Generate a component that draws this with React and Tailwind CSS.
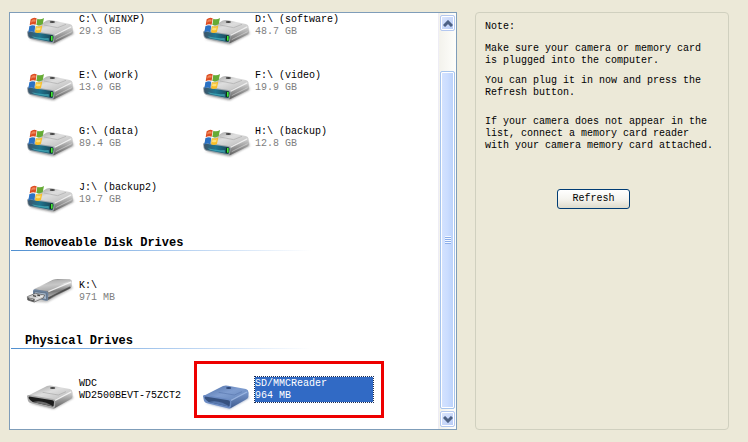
import React, { useState } from "react";

const logicalDrives = [
  { name: "C:\\ (WINXP)", info: "29.3 GB", type: "disk" },
  { name: "D:\\ (software)", info: "48.7 GB", type: "disk" },
  { name: "E:\\ (work)", info: "13.0 GB", type: "disk" },
  { name: "F:\\ (video)", info: "19.9 GB", type: "disk" },
  { name: "G:\\ (data)", info: "89.4 GB", type: "disk" },
  { name: "H:\\ (backup)", info: "12.8 GB", type: "disk" },
  { name: "J:\\ (backup2)", info: "19.7 GB", type: "disk" },
];

const removableDrives = [{ name: "K:\\", info: "971 MB", type: "usb" }];

const physicalDrives = [
  { name: "WDC", info: "WD2500BEVT-75ZCT2", type: "physical", dark: true },
  { name: "SD/MMCReader", info: "964 MB", type: "physical", marked: true },
];

// shared gradients, mounted once
const IconDefs = () => (
  <svg className="absolute h-0 w-0" aria-hidden="true">
    <defs>
      <linearGradient id="top" x1="0" y1="0" x2="1" y2="1">
        <stop offset="0" stopColor="#8d8d8d" />
        <stop offset="0.45" stopColor="#dedede" />
        <stop offset="1" stopColor="#b4b4b4" />
      </linearGradient>
      <linearGradient id="side" x1="0" y1="0" x2="0" y2="1">
        <stop offset="0" stopColor="#dadada" />
        <stop offset="0.5" stopColor="#9a9a9a" />
        <stop offset="1" stopColor="#5e5e5e" />
      </linearGradient>
      <linearGradient id="teal" x1="0" y1="0" x2="1" y2="0">
        <stop offset="0" stopColor="#3d5468" />
        <stop offset="0.45" stopColor="#1f7590" />
        <stop offset="1" stopColor="#1a4050" />
      </linearGradient>
      <linearGradient id="stick" x1="0.3" y1="0" x2="0.5" y2="1">
        <stop offset="0" stopColor="#858585" />
        <stop offset="0.3" stopColor="#dcdcdc" />
        <stop offset="0.6" stopColor="#7a7a7a" />
        <stop offset="0.8" stopColor="#a9a9a9" />
        <stop offset="1" stopColor="#444" />
      </linearGradient>
      <linearGradient id="blueTop" x1="0" y1="0" x2="1" y2="1">
        <stop offset="0" stopColor="#4d6da4" />
        <stop offset="0.5" stopColor="#7f9dd0" />
        <stop offset="1" stopColor="#6182b8" />
      </linearGradient>
      <linearGradient id="blueSide" x1="0" y1="0" x2="0" y2="1">
        <stop offset="0" stopColor="#7998cd" />
        <stop offset="1" stopColor="#3f5c91" />
      </linearGradient>
      <filter id="soft" x="-20%" y="-50%" width="140%" height="200%">
        <feGaussianBlur stdDeviation="3" />
      </filter>
    </defs>
  </svg>
);

const DiskIcon = () => (
  <svg viewBox="0 0 138 96" className="h-8 w-[46px] shrink-0 overflow-visible" aria-hidden="true">
    <path d="M6 78 L80 94 L140 62 L134 48 L70 74 Z" fill="#666" opacity="0.7" filter="url(#soft)" />
    <path d="M4 56 L58 23 Q64 20 72 21 L128 33 Q137 36 136 43 L82 68 Z" fill="url(#top)" />
    <path d="M80 65 L130 40 Q137 37 137 45 L137 59 Q136 63 130 66 L82 90 Q76 92 77 84 Z" fill="url(#side)" />
    <path d="M82 67 L132 42" stroke="#fafafa" strokeWidth="4" opacity="0.8" />
    <path d="M86 80 L134 56" stroke="#eee" strokeWidth="3" opacity="0.45" />
    <path d="M0 57 Q2 51 9 53 L76 63 Q83 64 83 70 L81 86 Q80 91 74 90 L10 78 Q4 76 2 70 Z" fill="#98a2a8" />
    <path d="M3 59 Q4 55 10 56 L75 66 Q80 67 80 72 L78 84 Q77 88 73 87 L11 75 Q6 73 4 68 Z" fill="url(#teal)" />
    <path d="M14 70 Q38 77 65 75 L66 83 L22 75 Z" fill="#4fc0c9" opacity="0.6" />
    <rect x="69" y="68" width="9" height="16" fill="#0f3017" />
    <rect x="72" y="69" width="5" height="14" fill="#42e83c" />
    <path d="M51 36 L92 44 L117 34" fill="none" stroke="#aaa" strokeWidth="2" />
    <ellipse cx="76" cy="27" rx="8" ry="3" fill="#444" />
    <path d="M11 19 Q20 11 29 16 L26 35 Q17 31 8 37 Z" fill="#dd4d22" />
    <path d="M31 17 Q41 21 51 15 L47 34 Q37 39 28 36 Z" fill="#66ab35" />
    <path d="M7 40 Q16 34 25 38 L22 58 Q13 53 4 59 Z" fill="#2b72c4" />
    <path d="M27 39 Q37 43 46 37 L42 57 Q33 62 24 58 Z" fill="#f8be28" />
    <path d="M14 22 Q20 17 26 20 L25 26 Q18 24 12 29 Z" fill="#f5a06f" opacity="0.7" />
    <path d="M29 43 Q36 46 41 43 L40 50 Q34 53 27 50 Z" fill="#ffe98b" opacity="0.8" />
  </svg>
);

const UsbIcon = () => (
  <svg viewBox="0 0 138 96" className="h-8 w-[46px] shrink-0 overflow-visible" aria-hidden="true">
    <path d="M6 67 L60 70 L137 28 L134 20 L60 58 Z" fill="#888" opacity="0.6" filter="url(#soft)" />
    <path d="M20 31 L78 2 Q84 0 92 0 L128 1 Q135 2 135 8 L134 22 Q133 27 127 30 L62 64 L56 46 Z" fill="url(#stick)" />
    <path d="M24 31 L80 4 L128 4 L64 36 Z" fill="#bdbdbd" opacity="0.65" />
    <path d="M64 38 L132 9" stroke="#fff" strokeWidth="4" opacity="0.8" />
    <path d="M64 58 L130 25" stroke="#3d3d3d" strokeWidth="5" opacity="0.75" />
    <path d="M18 36 Q18 31 24 31 L58 37 Q64 39 64 45 L63 62 Q62 67 56 65 L24 57 Q18 55 18 49 Z" fill="#6c829c" />
    <path d="M22 38 L57 42 L59 62 L24 54 Z" fill="#a6b8cc" stroke="#516277" strokeWidth="2" />
    <path d="M1 53 L25 43 L53 48 L49 57 L22 69 L2 63 Z" fill="#cfcfcf" stroke="#4e4e4e" strokeWidth="2" />
    <path d="M2 55 L23 60 L22 69 L3 63 Z" fill="#555" />
    <path d="M7 59 L19 62" stroke="#ededed" strokeWidth="2" />
    <path d="M18 50 L27 52 M31 48 L39 50" stroke="#444" strokeWidth="4" />
    <path d="M24 61 L49 50" stroke="#fff" strokeWidth="2" />
  </svg>
);

const PhysicalIcon = ({ selected }) => (
  <svg viewBox="0 0 138 96" className="h-8 w-[46px] shrink-0 overflow-visible" aria-hidden="true">
    <path d="M7 78 L80 96 L139 63 L132 52 L70 77 Z" fill={selected ? "#7186ae" : "#777"} opacity="0.7" filter="url(#soft)" />
    <path d="M1 57 L60 27 Q67 24 75 26 L129 36 Q137 39 136 46 L82 72 Z" fill={selected ? "url(#blueTop)" : "url(#top)"} />
    <path d="M80 70 L130 43 Q137 41 137 48 L136 59 Q135 64 130 67 L84 93 Q77 97 77 88 Z" fill={selected ? "url(#blueSide)" : "url(#side)"} />
    <path d="M84 70 L132 45" stroke={selected ? "#a4bee8" : "#fff"} strokeWidth="4" opacity="0.8" />
    <path d="M0 58 Q0 53 8 54 L78 66 Q85 68 85 74 L84 90 Q82 95 75 94 L12 79 Q6 77 3 72 Z" fill={selected ? "#6c8cc4" : "#a9a9a9"} />
    <path d="M5 60 Q6 58 11 59 L76 70 Q81 71 81 75 L80 86 Q79 89 74 88 L17 75 Q9 71 5 64 Z" fill={selected ? "#36517f" : "#1c1c1c"} />
    <path d="M18 75 Q36 69 58 77 Q70 82 77 87 L74 88 Z" fill={selected ? "#5878ae" : "#6d6d6d"} />
    <path d="M47 46 L94 54 L117 44" fill="none" stroke={selected ? "#5a79af" : "#a8a8a8"} strokeWidth="2" />
    <ellipse cx="77" cy="33" rx="8" ry="3" fill={selected ? "#2d4675" : "#444"} />
  </svg>
);

const DriveItem = ({ drive, selected, onSelect }) => {
  return (
    <li className="relative">
      <button
        type="button"
        onClick={() => onSelect(drive.name)}
        aria-pressed={selected}
        className="flex w-full items-start gap-[6px] pl-[17px] text-left focus:outline-none"
      >
        {drive.type === "disk" && <DiskIcon />}
        {drive.type === "usb" && <UsbIcon />}
        {drive.type === "physical" && <PhysicalIcon selected={selected} />}
        <span
          className={`block pt-px whitespace-nowrap ${
            selected ? "w-[118px] bg-[#316ac5] text-white outline-1 outline-dotted outline-[#1c2c50]" : "text-black"
          }`}
        >
          <span className="block">{drive.name}</span>
          <span className={`block ${selected ? "text-white" : drive.dark ? "text-black" : "text-[#808080]"}`}>
            {drive.info}
          </span>
        </span>
      </button>
      {drive.marked && (
        <span className="pointer-events-none absolute -top-4 left-2 h-[57px] w-[190px] border-3 border-[#ee0000]" />
      )}
    </li>
  );
};

const DriveGroup = ({ title, drives, selected, onSelect }) => {
  return (
    <section className="pb-6 last:pb-5">
      {title && (
        <div className="mb-7">
          <h2 className="pb-px pl-[15px] text-[12px] leading-3 font-bold">{title}</h2>
          <div className="ml-px h-px w-[300px] bg-linear-to-r from-[#4f8fd0] via-[#a9c9ee] to-white" />
        </div>
      )}
      <ul className="grid grid-cols-[176px_1fr] gap-y-6">
        {drives.map((drive) => (
          <DriveItem key={drive.name} drive={drive} selected={selected === drive.name} onSelect={onSelect} />
        ))}
      </ul>
    </section>
  );
};

const ScrollButton = ({ label, d }) => (
  <button
    type="button"
    aria-label={label}
    className="flex h-4 w-full shrink-0 items-center justify-center rounded-xs border border-[#b4c8f0] bg-linear-to-br from-[#dfe8fe] to-[#b5c9f5] ring-1 ring-white ring-inset"
  >
    <svg viewBox="0 0 10 7" className="h-[7px] w-[10px]" aria-hidden="true">
      <path d={d} fill="none" stroke="#4d6185" strokeWidth="3" />
    </svg>
  </button>
);

const ScrollBar = () => (
  <div className="flex w-[18px] shrink-0 flex-col border-l border-[#eeedf5] bg-linear-to-r from-[#f3f2ec] to-[#fefefb] px-px py-[2px]">
    <ScrollButton label="Scroll up" d="M1 6 L5 2 L9 6" />
    <div className="flex flex-1 flex-col pt-10 pb-[2px]">
      <div className="flex flex-1 flex-col items-center justify-center gap-px rounded-xs border border-[#a6c4ed] bg-linear-to-r from-[#d5e3fe] via-[#cbddff] to-[#b9d0fa] ring-1 ring-white ring-inset">
        {[0, 1, 2, 3].map((i) => (
          <span key={i} className="h-px w-[6px] bg-[#8caeea] shadow-[0_-1px_0_#f4f8ff]" />
        ))}
      </div>
    </div>
    <ScrollButton label="Scroll down" d="M1 1 L5 5 L9 1" />
  </div>
);

const App = () => {
  const [selected, setSelected] = useState("SD/MMCReader");

  return (
    <main className="flex min-h-screen items-start gap-[18px] bg-[#ece9d8] pt-3 pr-[19px] pb-3 pl-[9px] font-['Liberation_Mono',monospace] text-[10px] leading-3 text-black">
      <IconDefs />
      <div className="flex min-w-0 flex-1 border border-[#7f9db9] bg-white">
        <div className="min-w-0 flex-1">
          <DriveGroup drives={logicalDrives} selected={selected} onSelect={setSelected} />
          <DriveGroup title="Removeable Disk Drives" drives={removableDrives} selected={selected} onSelect={setSelected} />
          <DriveGroup title="Physical Drives" drives={physicalDrives} selected={selected} onSelect={setSelected} />
        </div>
        <ScrollBar />
      </div>

      <aside className="flex w-[254px] shrink-0 flex-col self-stretch rounded-sm border border-[#d0d0bf] pt-2 pr-3 pl-[9px]">
        <p className="mb-[10px]">Note:</p>
        <p className="mb-2">Make sure your camera or memory card is plugged into the computer.</p>
        <p className="mb-[17px]">You can plug it in now and press the Refresh button.</p>
        <p className="mb-[37px]">
          If your camera does not appear in the list, connect a memory card reader with your camera memory card
          attached.
        </p>
        <button
          type="button"
          className="ml-[72px] h-5 w-[73px] rounded-[3px] border border-[#003c74] bg-linear-to-b from-white via-[#f5f4ef] to-[#dedbcc]"
        >
          Refresh
        </button>
      </aside>
    </main>
  );
};

export default App;
